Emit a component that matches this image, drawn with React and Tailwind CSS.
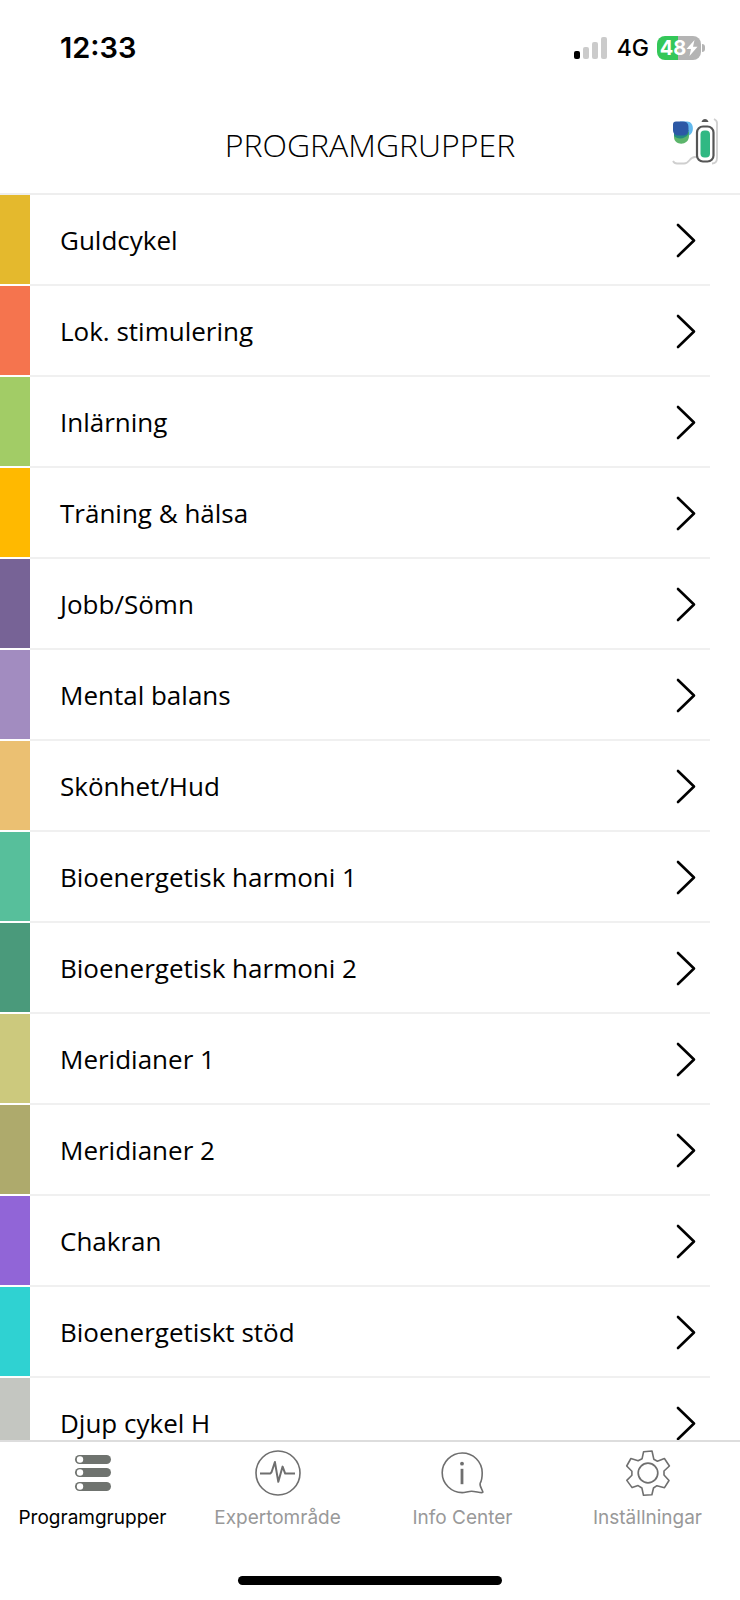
import React, { useState } from 'react';

const groups = [
  { name: 'Guldcykel', color: 'bg-[#e4b92d]' },
  { name: 'Lok. stimulering', color: 'bg-[#f5744e]' },
  { name: 'Inlärning', color: 'bg-[#a2cc66]' },
  { name: 'Träning & hälsa', color: 'bg-[#ffb900]' },
  { name: 'Jobb/Sömn', color: 'bg-[#776396]' },
  { name: 'Mental balans', color: 'bg-[#a28cc0]' },
  { name: 'Skönhet/Hud', color: 'bg-[#ebc072]' },
  { name: 'Bioenergetisk harmoni 1', color: 'bg-[#57bf9b]' },
  { name: 'Bioenergetisk harmoni 2', color: 'bg-[#4a9a7b]' },
  { name: 'Meridianer 1', color: 'bg-[#ccc97d]' },
  { name: 'Meridianer 2', color: 'bg-[#aeaa6c]' },
  { name: 'Chakran', color: 'bg-[#9165d7]' },
  { name: 'Bioenergetiskt stöd', color: 'bg-[#2fd2d2]' },
  { name: 'Djup cykel H', color: 'bg-[#c4c6c1]' },
];

const GroupsIcon = () => (
  <svg className="w-12 h-12" viewBox="0 0 48 48" aria-hidden="true">
    {[6, 19, 33].map((y) => (
      <g key={y}>
        <rect x="6" y={y} width="36" height="9" rx="4.5" fill="#6f736f" />
        <circle cx="11" cy={y + 4.5} r="3.2" fill="#fff" />
      </g>
    ))}
  </svg>
);

const PulseIcon = () => (
  <svg className="w-12 h-12" viewBox="0 0 48 48" fill="none" stroke="#6f6f6f" aria-hidden="true">
    <circle cx="24" cy="24" r="22" strokeWidth="1.6" />
    <path
      d="M6 24.400h10.500l1.200-1.600 3.200-9.800 3.400 19.800 4.300-15.200 2.600 7H41"
      strokeWidth="2"
      strokeLinejoin="round"
    />
  </svg>
);

const InfoIcon = () => (
  <svg className="w-12 h-12" viewBox="0 0 48 48" fill="none" stroke="#6f6f6f" aria-hidden="true">
    <path
      d="M41.200 34.200C43 31.200 43.200 27.500 43.200 23.800C43.200 12.700 34.200 4 23.200 4S3.200 12.900 3.200 23.800S12.200 43.600 23.200 43.600C26 43.600 29.500 42.200 32.500 42.200C36 42.200 40 43.600 42.800 43.600C44.500 43.600 43.800 42.500 43 40.800C42 38.600 40.400 36 41.200 34.200Z"
      strokeWidth="1.600"
      strokeLinejoin="round"
    />
    <circle cx="23" cy="14.700" r="1.900" fill="#6f6f6f" stroke="none" />
    <path d="M23 19.800v15.400" strokeWidth="2.800" />
  </svg>
);

const GearIcon = () => (
  <svg className="w-12 h-12" viewBox="0 0 48 48" fill="none" stroke="#6f6f6f" aria-hidden="true">
    <circle cx="24" cy="24" r="9.800" strokeWidth="1.700" />
    <path
      d="M19.600 2.700L28 2l1.800 8.200 3.600 2 7-2.700 5 7.500-5.400 5v4l5 5.500-4.500 7.200-7.600-2-3.400 2.300-1.600 6.800-8.400.5-1.600-7.300-3.800-2.400-6 2-5.300-7.200 5.100-5.100v-4L2.700 17l4.200-7.500 7.200 2.200 4-2Z"
      strokeWidth="1.600"
      strokeLinejoin="round"
    />
  </svg>
);

const tabs = [
  { name: 'Programgrupper', Icon: GroupsIcon },
  { name: 'Expertområde', Icon: PulseIcon },
  { name: 'Info Center', Icon: InfoIcon },
  { name: 'Inställningar', Icon: GearIcon },
];

const StatusBar = () => (
  <div className="h-24 shrink-0 flex items-center justify-between pl-15 pr-[35px] font-['Inter',sans-serif] text-black">
    <span className="text-[29px] leading-8 font-semibold">12:33</span>
    <div className="flex items-center gap-2">
      <svg className="w-9 h-6" viewBox="0 0 36 24" aria-hidden="true">
        <rect x="1" y="15" width="6" height="8" rx="2" fill="#000" />
        <rect x="10" y="11" width="6" height="12" rx="2" fill="#cbcbcb" />
        <rect x="19" y="6" width="6" height="17" rx="2" fill="#cbcbcb" />
        <rect x="28" y="1" width="6" height="22" rx="2" fill="#cbcbcb" />
      </svg>
      <span className="text-[23px] leading-8 font-medium">4G</span>
      <div className="flex items-center gap-px">
        <div className="w-11 h-6 rounded-lg flex items-center justify-center bg-linear-to-r from-[#34c759] from-48% to-[#b4b4b4] to-48% text-white">
          <span className="text-xl leading-6 font-bold">48</span>
          <svg className="w-3 h-4" viewBox="0 0 12 16" fill="currentColor" aria-hidden="true">
            <path d="M8.500 0L0.500 9h4.500L3.500 16L11.500 6.800H7Z" />
          </svg>
        </div>
        <span className="w-[3px] h-2 rounded-r-full bg-[#b4b4b4]"></span>
      </div>
    </div>
  </div>
);

const DeviceIcon = () => (
  <svg className="w-12 h-12" viewBox="0 0 48 48" fill="none" aria-hidden="true">
    <path
      d="M1 44c1 2 2 2.500 4 2.500h7c6 0 5-6.500 11-6.500h3M42 2c2 1 3 2 3 4v35c0 4-2 5.500-5 5.500"
      stroke="#cfcfcf"
      strokeWidth="1.800"
    />
    <path d="M8 4.500h7c8 0 8 14.500-1 14.500H8Z" fill="#62b9ee" />
    <path d="M2 15h15v4c0 10-15 10-15 1Z" fill="#5cb56b" />
    <path d="M2 13h14.500v4c-3 5-11 6-14.500 2Z" fill="#238b80" />
    <path d="M1 7.500c0-2 1-3 3-3h7c6 0 5.500 5 5.500 7.500 0 4-1.500 6.500-5.500 6.500H7c-4 0-6-2-6-5.500Z" fill="#2c58a5" />
    <path d="M29.500 5c1-4 6-4 7 0Z" fill="#555" />
    <rect x="25" y="9.500" width="16.500" height="35" rx="6" fill="#fff" stroke="#555" strokeWidth="2.200" />
    <rect x="28.500" y="13.500" width="9.500" height="27" rx="4" fill="#30b883" />
  </svg>
);

const Header = () => (
  <header className="h-[99px] shrink-0 grid grid-cols-[1fr_auto_1fr] items-center px-5 border-b-2 border-[#eeeeee]">
    <h1 className="col-start-2 text-[32px] leading-10 font-light text-black">PROGRAMGRUPPER</h1>
    <button aria-label="Batteri" className="justify-self-end pb-2">
      <DeviceIcon />
    </button>
  </header>
);

const GroupRow = ({ group }) => (
  <li>
    <button className="w-full flex text-left">
      <span className={`w-[30px] h-[89px] mb-[2px] shrink-0 ${group.color}`}></span>
      <span className="flex-1 mr-[30px] pl-[30px] pr-3 flex items-center justify-between border-b-2 border-[#f0f0f0]">
        <span className="text-[26px] leading-9 text-black">{group.name}</span>
        <svg className="w-6 h-9" viewBox="0 0 24 36" fill="none" stroke="#000" aria-hidden="true">
          <path d="M4 3l16 15.500L4 34" strokeWidth="2.600" strokeLinecap="round" strokeLinejoin="round" />
        </svg>
      </span>
    </button>
  </li>
);

const App = () => {
  const [activeTab, setActiveTab] = useState('Programgrupper');

  return (
    <div className="h-screen flex flex-col bg-white font-['Open_Sans',sans-serif]">
      <StatusBar />
      <Header />

      {/* Program groups */}
      <main className="flex-1 min-h-0 overflow-y-auto [scrollbar-width:none]">
        <ul>
          {groups.map((group) => (
            <GroupRow key={group.name} group={group} />
          ))}
        </ul>
      </main>

      {/* Tab bar */}
      <footer className="shrink-0 border-t-2 border-[#dddddd] font-['Inter',sans-serif]">
        <nav className="grid grid-cols-4 pt-[7px]">
          {tabs.map(({ name, Icon }) => (
            <button
              key={name}
              onClick={() => setActiveTab(name)}
              className={`flex flex-col items-center gap-[7px] text-[19px] leading-7 ${
                activeTab === name ? 'text-black' : 'text-[#999999]'
              }`}
            >
              <Icon />
              {name}
            </button>
          ))}
        </nav>
        <div className="pt-11 pb-[15px]">
          <div className="w-[264px] h-[9px] mx-auto rounded-full bg-black"></div>
        </div>
      </footer>
    </div>
  );
};

export default App;
